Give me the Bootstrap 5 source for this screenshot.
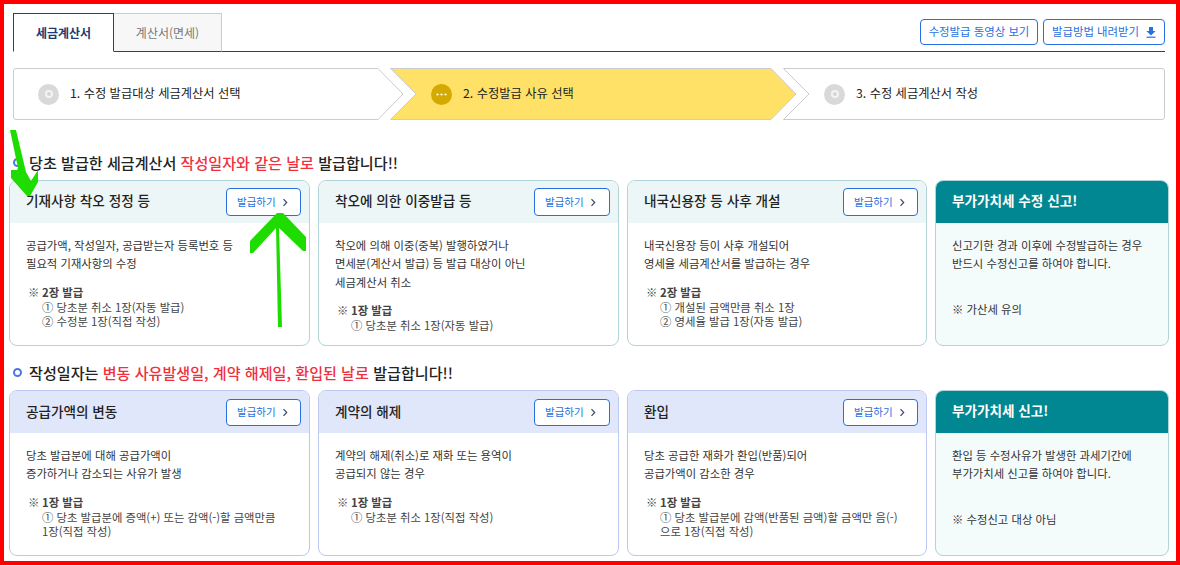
<!DOCTYPE html>
<html lang="ko">
<head>
<meta charset="utf-8">
<title>수정발급</title>
<link href="https://cdn.jsdelivr.net/npm/bootstrap@5.3.0/dist/css/bootstrap.min.css" rel="stylesheet">
<style>
html,body{height:100%;}
body{font-family:"Noto Sans CJK KR","Noto Sans",sans-serif;font-size:12px;color:#333;background:#fff;overflow:hidden;}
.frame{position:relative;width:1180px;height:565px;border:4px solid #f00;padding:9px 5px 0 5px;overflow:hidden;}
.top-area{margin:0 6px 0 4px;height:39px;border-bottom:1px solid #1d4287;}
.tab-item{height:39px;display:flex;align-items:center;justify-content:center;font-size:12px;}
.tab-on{color:#1d3b73;font-weight:700;background:#fff;border:1px solid #1d4287;border-bottom:1px solid #fff;width:101px;}
.tab-off{color:#777;background:#f7f7f7;border:1px solid #ccc;border-left:0;width:108px;border-bottom:1px solid #1d4287;}
.top-btns{gap:5px;padding-top:6px;}
.top-btn{height:26px;padding:0;font-size:11.4px;line-height:1;color:#2a6fe0;background:#fff;border:1px solid #2a6fe0;border-radius:4px;}
.top-btn:hover{color:#2a6fe0;background:#fff;border-color:#2a6fe0;}
.top-btn-a{width:118px;}
.top-btn-b{width:122px;gap:7px;}
.flow{margin:16px 7px 0 4px;height:52px;}
.stage{position:relative;height:52px;flex:none;padding-left:25px;font-size:12.25px;color:#222;}
.stage>svg.shape{position:absolute;left:0;top:0;}
.stage>.dot,.stage>.stage-txt{position:relative;}
.stage-txt{margin-top:-2px;}
.stage-a{width:390px;}
.stage-b{width:406px;margin-left:-13px;padding-left:41px;}
.stage-c{width:382px;margin-left:-13px;padding-left:41px;}
.dot{width:21px;height:21px;border-radius:50%;flex:none;margin-right:11px;background:#d9d9d9;}
.dot-ring{width:8px;height:8px;border-radius:50%;background:#d6d6d6;border:2px solid #f4f4f4;}
.dot-on{background:#d4a900;color:#fff;}
.sect-title{font-size:15.1px;font-weight:500;color:#222;height:19px;line-height:19px;margin-left:4px;}
.sect-one{margin-top:33px;}
.sect-two{margin-top:17px;}
.bullet{width:9px;height:9px;border:2px solid #4b78e0;border-radius:50%;background:#fff;flex:none;margin-right:7px;}
.hot{color:#f0303c;}
.card-line{margin-top:8px;gap:8px;height:166px;}
.sheet{flex:none;width:301px;height:166px;border-radius:8px;overflow:hidden;background:#fff;--bs-card-border-radius:8px;--bs-card-inner-border-radius:7px;}
.sheet-w3{width:300px;}
.sheet-w4{width:234px;}
.sheet .card-header{height:42px;padding:0 8px 0 16px;border:0;border-radius:0;font-size:13.6px;font-weight:500;color:#222;}
.head-txt{margin-top:-3px;}
.g-blue .head-txt{margin-top:-1px;}
.sheet .card-body{padding:13px 16px 0 16px;font-size:11.35px;line-height:18.3px;color:#333;}
.g-mint{border:1px solid #b1d4d8;}
.g-mint .card-header{background:#ecf6f6;}
.g-blue{border:1px solid #bcc8f0;}
.g-blue .card-header{background:#e1e7fa;}
.g-teal{border:1px solid #b1d4d8;background:#f4fbfb;}
.g-teal .card-header{background:#008792;color:#fff;font-weight:700;}
.go-btn{width:75px;height:28px;padding:0 0 0 10px;font-size:10.5px;line-height:1;color:#2a6fe0;background:#fff;border:1px solid #2a6fe0;border-radius:4px;gap:6px;}
.go-btn:hover{color:#2a6fe0;background:#fff;border-color:#2a6fe0;}
.g-blue .go-btn{height:27px;margin-top:1px;}
.sheet:nth-child(2) .go-btn{width:76px;}
.notes{margin:12.5px 0 0 2px;line-height:14.4px;color:#444;}
.notes strong{font-weight:700;color:#444;}
.notes-mark{display:inline-block;width:14px;}
.notes-sub{padding-left:14px;}
.teal-note{margin-top:27px;}
.scribble{position:absolute;left:-4px;top:-4px;pointer-events:none;}
</style>
</head>
<body>
<div class="frame">
  <div class="top-area d-flex justify-content-between">
    <div class="d-flex">
      <div class="tab-item tab-on">세금계산서</div>
      <div class="tab-item tab-off">계산서(면세)</div>
    </div>
    <div class="top-btns d-flex">
      <button type="button" class="btn top-btn top-btn-a">수정발급 동영상 보기</button>
      <button type="button" class="btn top-btn top-btn-b d-flex align-items-center justify-content-center">발급방법 내려받기
        <svg width="10" height="11" viewBox="0 0 10 11"><path d="M3 0h4v4h2.6L5 8.4.4 4H3z" fill="#2a6fe0"/><rect x="0.5" y="9.6" width="9" height="1.2" fill="#2a6fe0"/></svg>
      </button>
    </div>
  </div>

  <div class="flow d-flex">
    <div class="stage stage-a d-flex align-items-center">
      <svg class="shape" width="390" height="52"><path d="M365 .5H3A2.5 2.5 0 0 0 .5 3v46A2.5 2.5 0 0 0 3 51.500h362L390 26z" fill="#fff" stroke="#ccc"/></svg>
      <span class="dot d-flex align-items-center justify-content-center"><span class="dot-ring"></span></span>
      <span class="stage-txt">1. 수정 발급대상 세금계산서 선택</span>
    </div>
    <div class="stage stage-b d-flex align-items-center">
      <svg class="shape" width="406" height="52"><path d="M.5 .5H381L406 26 381 51.500H.5L26 26z" fill="#ffe168" stroke="#ccc"/></svg>
      <span class="dot dot-on d-flex align-items-center justify-content-center"><svg width="11" height="3" viewBox="0 0 11 3"><circle cx="1.500" cy="1.500" r="1.100" fill="#fff"/><circle cx="5.500" cy="1.500" r="1.100" fill="#fff"/><circle cx="9.500" cy="1.500" r="1.100" fill="#fff"/></svg></span>
      <span class="stage-txt">2. 수정발급 사유 선택</span>
    </div>
    <div class="stage stage-c d-flex align-items-center">
      <svg class="shape" width="382" height="52"><path d="M.5 .5H379A2.5 2.5 0 0 1 381.500 3v46A2.500 2.500 0 0 1 379 51.500H.5L26 26z" fill="#fff" stroke="#ccc"/></svg>
      <span class="dot d-flex align-items-center justify-content-center"><span class="dot-ring"></span></span>
      <span class="stage-txt">3. 수정 세금계산서 작성</span>
    </div>
  </div>

  <div class="sect-title sect-one d-flex align-items-center"><span class="bullet"></span><span>당초 발급한 세금계산서 <span class="hot">작성일자와 같은 날로</span> 발급합니다!!</span></div>
  <div class="card-line d-flex">
    <div class="card sheet g-mint">
      <div class="card-header d-flex align-items-center justify-content-between"><span class="head-txt">기재사항 착오 정정 등</span>
        <button type="button" class="btn go-btn d-flex align-items-center">발급하기 <svg width="6" height="9" viewBox="0 0 6 9"><path d="M1.500 1.200 4.700 4.500 1.500 7.800" fill="none" stroke="#3a4a6b" stroke-width="1.200"/></svg></button></div>
      <div class="card-body">공급가액, 작성일자, 공급받는자 등록번호 등<br>필요적 기재사항의 수정
        <div class="notes"><span class="notes-mark">※</span><strong>2장 발급</strong><div class="notes-sub">① 당초분 취소 1장(자동 발급)<br>② 수정분 1장(직접 작성)</div></div>
      </div>
    </div>
    <div class="card sheet g-mint">
      <div class="card-header d-flex align-items-center justify-content-between"><span class="head-txt">착오에 의한 이중발급 등</span>
        <button type="button" class="btn go-btn d-flex align-items-center">발급하기 <svg width="6" height="9" viewBox="0 0 6 9"><path d="M1.500 1.200 4.700 4.500 1.500 7.800" fill="none" stroke="#3a4a6b" stroke-width="1.200"/></svg></button></div>
      <div class="card-body">착오에 의해 이중(중복) 발행하였거나<br>면세분(계산서 발급) 등 발급 대상이 아닌<br>세금계산서 취소
        <div class="notes"><span class="notes-mark">※</span><strong>1장 발급</strong><div class="notes-sub">① 당초분 취소 1장(자동 발급)</div></div>
      </div>
    </div>
    <div class="card sheet sheet-w3 g-mint">
      <div class="card-header d-flex align-items-center justify-content-between"><span class="head-txt">내국신용장 등 사후 개설</span>
        <button type="button" class="btn go-btn d-flex align-items-center">발급하기 <svg width="6" height="9" viewBox="0 0 6 9"><path d="M1.500 1.200 4.700 4.500 1.500 7.800" fill="none" stroke="#3a4a6b" stroke-width="1.200"/></svg></button></div>
      <div class="card-body">내국신용장 등이 사후 개설되어<br>영세율 세금계산서를 발급하는 경우
        <div class="notes"><span class="notes-mark">※</span><strong>2장 발급</strong><div class="notes-sub">① 개설된 금액만큼 취소 1장<br>② 영세율 발급 1장(자동 발급)</div></div>
      </div>
    </div>
    <div class="card sheet sheet-w4 g-teal">
      <div class="card-header d-flex align-items-center"><span class="head-txt">부가가치세 수정 신고!</span></div>
      <div class="card-body">신고기한 경과 이후에 수정발급하는 경우<br>반드시 수정신고를 하여야 합니다.
        <div class="teal-note">※ 가산세 유의</div>
      </div>
    </div>
  </div>

  <div class="sect-title sect-two d-flex align-items-center"><span class="bullet"></span><span>작성일자는 <span class="hot">변동 사유발생일, 계약 해제일, 환입된 날로</span> 발급합니다!!</span></div>
  <div class="card-line d-flex">
    <div class="card sheet g-blue">
      <div class="card-header d-flex align-items-center justify-content-between"><span class="head-txt">공급가액의 변동</span>
        <button type="button" class="btn go-btn d-flex align-items-center">발급하기 <svg width="6" height="9" viewBox="0 0 6 9"><path d="M1.500 1.200 4.700 4.500 1.500 7.800" fill="none" stroke="#3a4a6b" stroke-width="1.200"/></svg></button></div>
      <div class="card-body">당초 발급분에 대해 공급가액이<br>증가하거나 감소되는 사유가 발생
        <div class="notes"><span class="notes-mark">※</span><strong>1장 발급</strong><div class="notes-sub">① 당초 발급분에 증액(+) 또는 감액(-)할 금액만큼<br>1장(직접 작성)</div></div>
      </div>
    </div>
    <div class="card sheet g-blue">
      <div class="card-header d-flex align-items-center justify-content-between"><span class="head-txt">계약의 해제</span>
        <button type="button" class="btn go-btn d-flex align-items-center">발급하기 <svg width="6" height="9" viewBox="0 0 6 9"><path d="M1.500 1.200 4.700 4.500 1.500 7.800" fill="none" stroke="#3a4a6b" stroke-width="1.200"/></svg></button></div>
      <div class="card-body">계약의 해제(취소)로 재화 또는 용역이<br>공급되지 않는 경우
        <div class="notes"><span class="notes-mark">※</span><strong>1장 발급</strong><div class="notes-sub">① 당초분 취소 1장(직접 작성)</div></div>
      </div>
    </div>
    <div class="card sheet sheet-w3 g-blue">
      <div class="card-header d-flex align-items-center justify-content-between"><span class="head-txt">환입</span>
        <button type="button" class="btn go-btn d-flex align-items-center">발급하기 <svg width="6" height="9" viewBox="0 0 6 9"><path d="M1.500 1.200 4.700 4.500 1.500 7.800" fill="none" stroke="#3a4a6b" stroke-width="1.200"/></svg></button></div>
      <div class="card-body">당초 공급한 재화가 환입(반품)되어<br>공급가액이 감소한 경우
        <div class="notes"><span class="notes-mark">※</span><strong>1장 발급</strong><div class="notes-sub">① 당초 발급분에 감액(반품된 금액)할 금액만 음(-)<br>으로 1장(직접 작성)</div></div>
      </div>
    </div>
    <div class="card sheet sheet-w4 g-teal">
      <div class="card-header d-flex align-items-center"><span class="head-txt">부가가치세 신고!</span></div>
      <div class="card-body">환입 등 수정사유가 발생한 과세기간에<br>부가가치세 신고를 하여야 합니다.
        <div class="teal-note">※ 수정신고 대상 아님</div>
      </div>
    </div>
  </div>

  <svg class="scribble" width="1180" height="565" viewBox="0 0 1180 565" fill="#1fdc00">
    <path d="M10 130H16L26 172 31 181 38 170V182L30 196H27L11 178V170H17L18 168Z"/>
    <path d="M250 241 277 213H283L306 237V251H303L279 228 282 327H278L276 228 253 253H250Z"/>
  </svg>
</div>
</body>
</html>
